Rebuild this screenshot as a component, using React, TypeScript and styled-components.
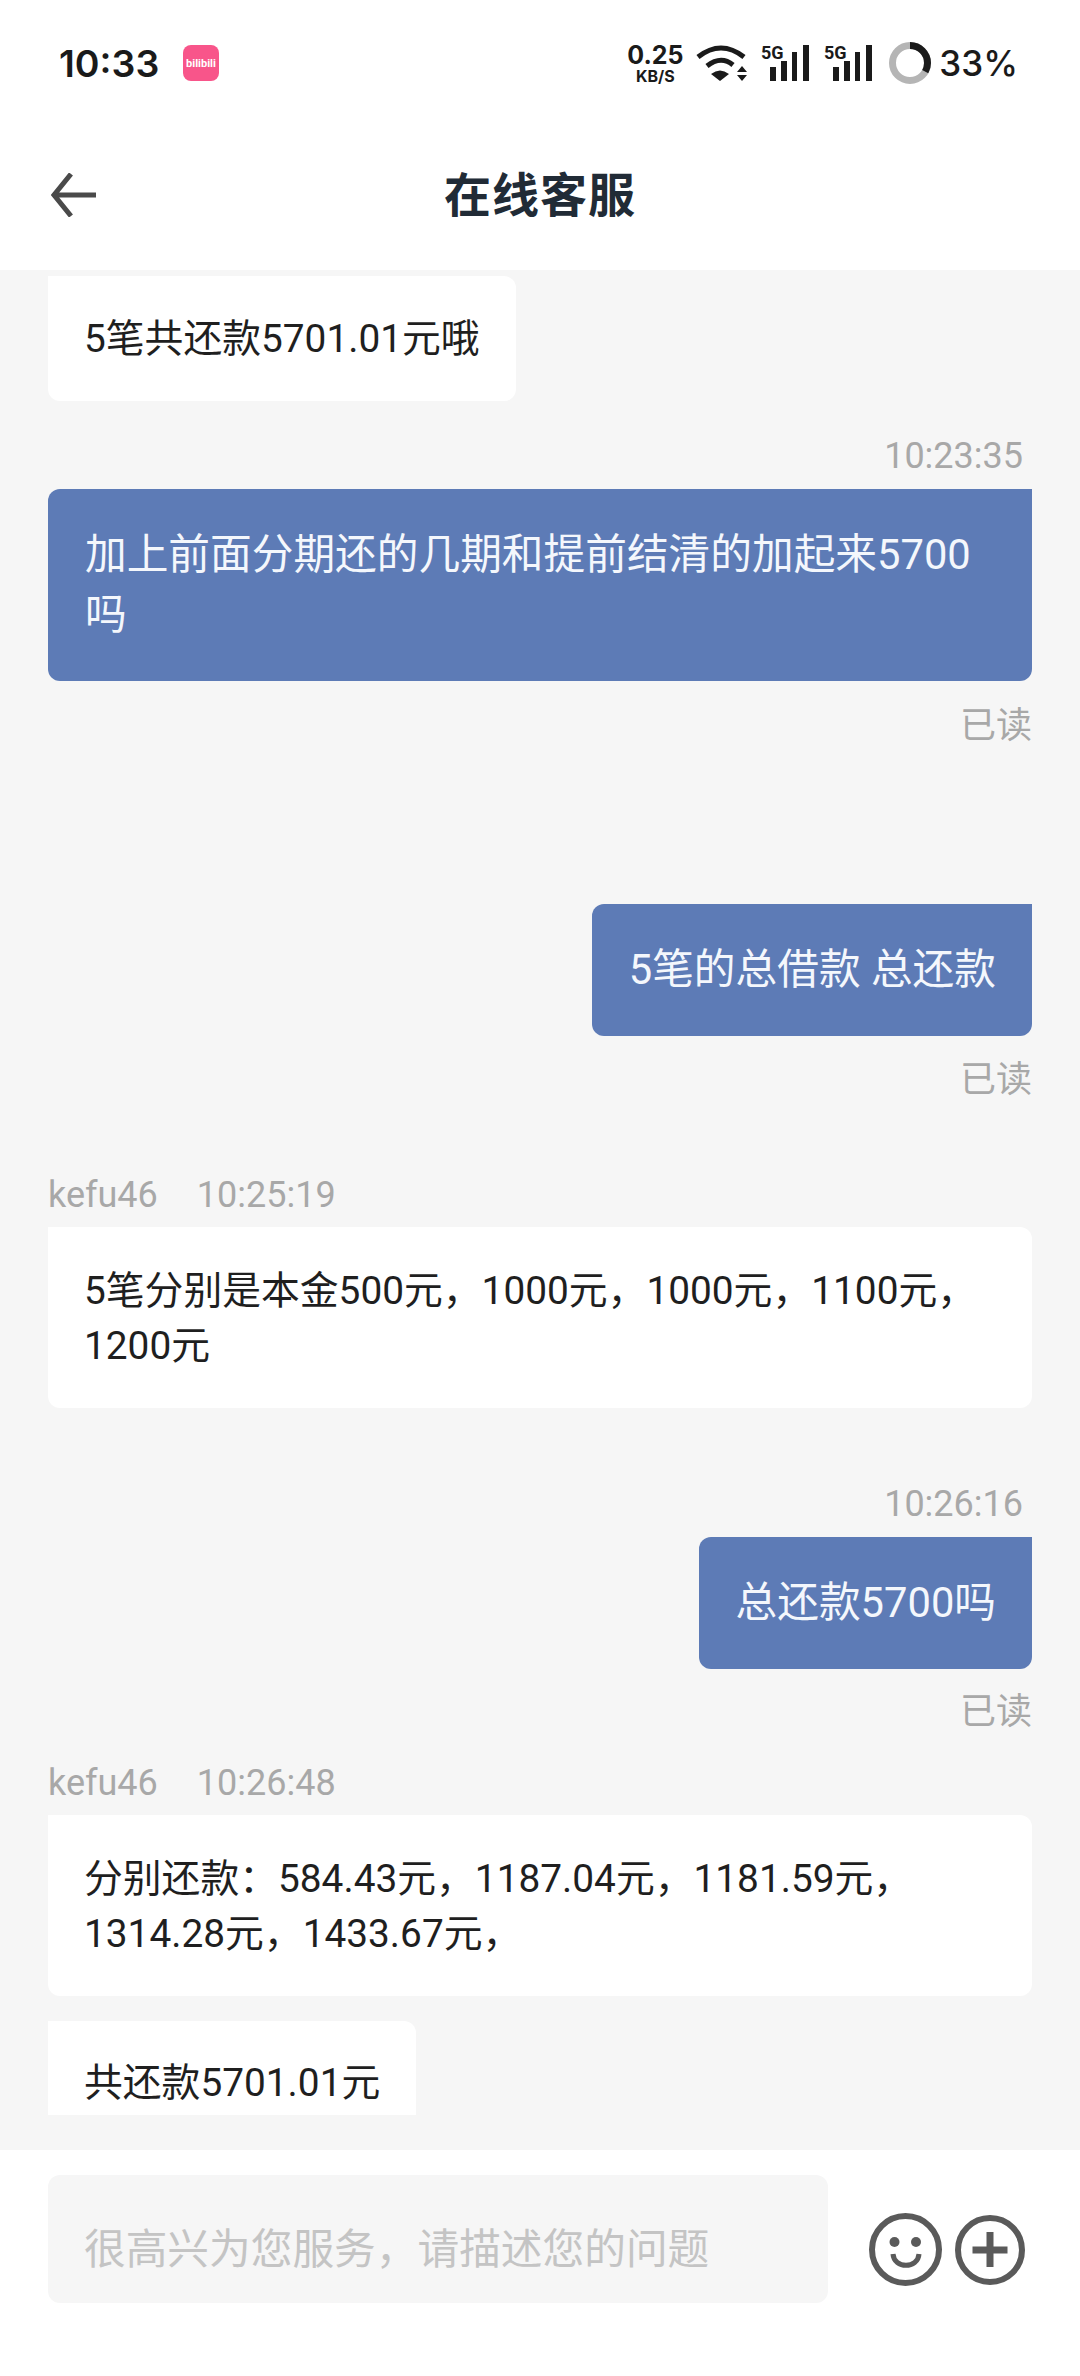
import React from "react";
import styled, { createGlobalStyle } from "styled-components";

const GlobalStyle = createGlobalStyle`
  html, body { margin: 0; padding: 0; background: #fff; }
  body { font-family: Roboto, "Noto Sans CJK SC", sans-serif; }
`;
const FONT = `Roboto, "Noto Sans CJK SC", sans-serif`;
const Page = styled.div`
  width: 1080px; height: 2376px; display: flex; flex-direction: column; overflow: hidden; background: #fff;
`;
const StatusBar = styled.div`
  height: 126px; flex: none; box-sizing: border-box; padding: 0 62px 0 59px; display: flex; align-items: center; justify-content: space-between;
`;
const StatusSide = styled.div`display: flex; align-items: center;`;
const Clock = styled.span`font: 600 37.5px Inter, sans-serif; color: #1a1a1a;`;
const AppBadge = styled.svg`margin-left: 24px; display: block;`;
const Speed = styled.div`display: flex; flex-direction: column; align-items: center; width: 56px; color: #1a1a1a; font-family: Inter, sans-serif; font-weight: 700; margin-right: 13px;`;
const SpeedValue = styled.span`font-size: 25px; line-height: 24px; white-space: nowrap;`;
const SpeedUnit = styled.span`font-size: 16px; line-height: 15px; margin-top: 2px; white-space: nowrap;`;
const StatusIcon = styled.svg<{ $gap: number }>`display: block; margin-right: ${(p) => p.$gap}px;`;
const Battery = styled.span`font: 500 35px Inter, sans-serif; color: #1a1a1a;`;
const Header = styled.header`
  height: 144px; flex: none; box-sizing: border-box; padding-bottom: 14px; display: flex; align-items: center; justify-content: center; position: relative; background: #fff;
`;
const BackButton = styled.svg`position: absolute; left: 50px; top: 47px;`;
const Title = styled.h1`margin: 0; font: 700 47px ${FONT}; color: #212b36; letter-spacing: 1px;`;
const Chat = styled.main`
  height: 1880px; flex: none; background: #f6f6f6; overflow: hidden; box-sizing: border-box; padding: 6px 48px 0; display: flex; flex-direction: column;
`;
const Meta = styled.div<{ $right?: boolean; $top: number }>`
  display: flex; gap: 39px; justify-content: ${(p) => (p.$right ? "flex-end" : "flex-start")};
  margin-top: ${(p) => p.$top}px; padding-right: ${(p) => (p.$right ? "9px" : "0")};
  font: 400 36px/44px ${FONT}; color: #a8a8a8; height: 44px; flex: none;
`;
const Bubble = styled.div<{ $self?: boolean; $top: number; $h: number }>`
  box-sizing: border-box; align-self: ${(p) => (p.$self ? "flex-end" : "flex-start")}; flex: none;
  margin-top: ${(p) => p.$top}px; min-height: ${(p) => p.$h}px; max-width: 984px;
  padding: 0 36px 0 ${(p) => (p.$self ? 37 : 36)}px; display: flex; align-items: center;
  background: ${(p) => (p.$self ? "#5d7bb6" : "#fff")}; color: ${(p) => (p.$self ? "#f4f7fc" : "#1f1f1f")};
  font: 400 ${(p) => (p.$self ? 41.7 : 38.8)}px/${(p) => (p.$self ? 60 : 55)}px ${FONT};
  border-radius: ${(p) => (p.$self ? "12px 0 12px 12px" : "0 12px 12px 12px")};
`;
const LastBubble = styled(Bubble)`
  height: 94px; min-height: 0; align-items: flex-start; padding-top: 34px; border-radius: 0 12px 0 0; overflow: hidden;
`;
const Read = styled.div<{ $top: number }>`
  align-self: flex-end; flex: none; margin-top: ${(p) => p.$top}px; font: 400 36px/44px ${FONT}; color: #a8a8a8;
`;
const Composer = styled.footer`
  flex: 1; display: flex; align-items: flex-start; padding: 25px 0 0 48px; background: #fff;
`;
const InputBox = styled.div`
  width: 780px; height: 128px; box-sizing: border-box; padding: 14px 36px 0; display: flex; align-items: center; background: #f6f6f6; border-radius: 12px;
  font: 400 41.7px ${FONT}; color: #c4c4c4;
`;
const ComposerIcon = styled.svg<{ $left: number; $top: number }>`
  display: block; flex: none; margin: ${(p) => p.$top}px 0 0 ${(p) => p.$left}px;
`;

const Signal = ({ gap }: { gap: number }) => (
  <StatusIcon $gap={gap} width="48" height="44" viewBox="0 -4 48 44">
    <text x="0" y="14" fontSize="18" fontWeight="700" fill="#1a1a1a" fontFamily="Roboto, sans-serif">5G</text>
    <path d="M9 22h6v14H9zM20 16h6v20h-6zM31 7h5v29h-5zM42 0h6v36h-6z" fill="#1a1a1a" />
  </StatusIcon>
);

export default function App() {
  return (
    <Page>
      <GlobalStyle />
      <StatusBar>
        <StatusSide>
          <Clock>10:33</Clock>
          <AppBadge width="36" height="36" viewBox="0 0 36 36">
            <rect width="36" height="36" rx="8" fill="#f8558a" />
            <text x="18" y="22" textAnchor="middle" fontSize="11" fontWeight="700" fill="#fff" fontFamily="Roboto, sans-serif">bilibili</text>
          </AppBadge>
        </StatusSide>
        <StatusSide>
          <Speed><SpeedValue>0.25</SpeedValue><SpeedUnit>KB/S</SpeedUnit></Speed>
          <StatusIcon $gap={14} width="51" height="36" viewBox="0 0 51 36">
            <path d="M2 12 Q25 -6 48 12" fill="none" stroke="#1a1a1a" strokeWidth="5" />
            <path d="M11 21 Q25 10 37 20" fill="none" stroke="#1a1a1a" strokeWidth="5" />
            <path d="M24 36 L15 29 Q24 22 33 29 Z" fill="#1a1a1a" />
            <path d="M46 21 L51 27 H41 Z M41 30 H51 L46 36 Z" fill="#1a1a1a" />
          </StatusIcon>
          <Signal gap={15} />
          <Signal gap={17} />
          <StatusIcon $gap={8} width="42" height="42" viewBox="0 0 42 42">
            <circle cx="21" cy="21" r="17.5" fill="none" stroke="#b5b5b5" strokeWidth="7" />
            <circle cx="21" cy="21" r="17.5" fill="none" stroke="#1a1a1a" strokeWidth="7" strokeDasharray="36.3 73.7" transform="rotate(-90 21 21)" />
          </StatusIcon>
          <Battery>33%</Battery>
        </StatusSide>
      </StatusBar>
      <Header>
        <BackButton width="46" height="44" viewBox="0 0 46 44">
          <path d="M21 1 L4 22 L21 43 M4 22 H46" fill="none" stroke="#4a4a4a" strokeWidth="5" />
        </BackButton>
        <Title>在线客服</Title>
      </Header>
      <Chat>
        <Bubble $h={125} $top={0}>5笔共还款5701.01元哦</Bubble>
        <Meta $right $top={33}><span>10:23:35</span></Meta>
        <Bubble $self $h={192} $top={11}>加上前面分期还的几期和提前结清的加起来5700吗</Bubble>
        <Read $top={23}>已读</Read>
        <Bubble $self $h={132} $top={156}>5笔的总借款 总还款</Bubble>
        <Read $top={22}>已读</Read>
        <Meta $top={71}><span>kefu46</span><span>10:25:19</span></Meta>
        <Bubble $h={181} $top={10}>5笔分别是本金500元，1000元，1000元，1100元，1200元</Bubble>
        <Meta $right $top={74}><span>10:26:16</span></Meta>
        <Bubble $self $h={132} $top={11}>总还款5700吗</Bubble>
        <Read $top={21}>已读</Read>
        <Meta $top={27}><span>kefu46</span><span>10:26:48</span></Meta>
        <Bubble $h={181} $top={10}>分别还款：584.43元，1187.04元，1181.59元，1314.28元，1433.67元，</Bubble>
        <LastBubble $h={94} $top={25}>共还款5701.01元</LastBubble>
      </Chat>
      <Composer>
        <InputBox>很高兴为您服务，请描述您的问题</InputBox>
        <ComposerIcon $left={41} $top={38} width="73" height="73" viewBox="0 0 73 73">
          <circle cx="36.5" cy="36.5" r="33.5" fill="none" stroke="#5a5a5a" strokeWidth="6" />
          <circle cx="25.5" cy="29" r="5" fill="#5a5a5a" />
          <circle cx="47" cy="29" r="5" fill="#5a5a5a" />
          <path d="M24 41 C25 56 49 56 50 41" fill="none" stroke="#5a5a5a" strokeWidth="5" />
        </ComposerIcon>
        <ComposerIcon $left={13} $top={40} width="70" height="70" viewBox="0 0 70 70">
          <circle cx="35" cy="35" r="32" fill="none" stroke="#5a5a5a" strokeWidth="6" />
          <path d="M35 17 V52 M17.5 35 H52.5" fill="none" stroke="#5a5a5a" strokeWidth="7" />
        </ComposerIcon>
      </Composer>
    </Page>
  );
}
